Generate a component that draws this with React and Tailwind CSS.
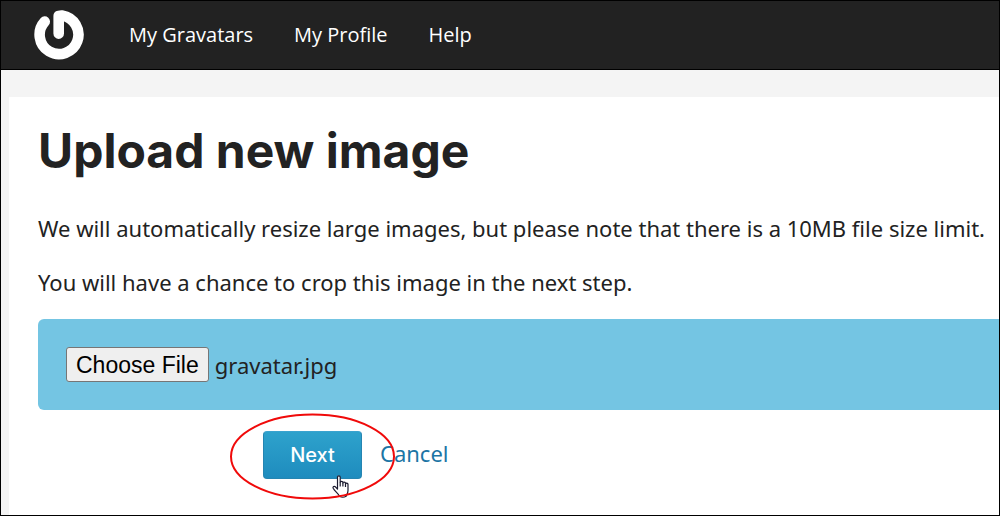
import { useRef, useState } from "react";

function Logo() {
  return (
    <svg viewBox="0 0 54 54" className="h-[54px] w-[54px]" fill="none" stroke="#fff" strokeWidth="10.6" strokeLinecap="round" strokeLinejoin="round" aria-hidden="true">
      <path d="M12.7 13.6A19.4 19.4 0 1 0 30 7.500L26.700 8V25.600" />
    </svg>
  );
}

function HandCursor() {
  return (
    <svg viewBox="0 0 17 23" className="pointer-events-none absolute left-[69px] top-[44px] h-[23px] w-[17px]" fill="#fff" stroke="#1a1a2e" strokeWidth="1.2" strokeLinejoin="round" aria-hidden="true">
      <path d="M5.5 14V2.2C5.5 .3 8.200 .3 8.200 2.200V7.500C8.200 6 10.900 6 10.900 7.500V8C10.900 6.800 13.500 6.900 13.500 8.200V8.800C13.500 7.800 16 8 16 9.300V15.500C16 18.500 14.500 19.500 14.200 21.200C12 22.500 9.500 22.500 7.500 21.200C6.500 18.500 3 16.500 1.200 13.200C.5 11.800 2.200 10.700 3.400 11.800Z" />
      <path d="M8.200 7.500V11.500M10.900 8V11.500M13.500 8.800V12" fill="none" />
    </svg>
  );
}

export default function App() {
  const picker = useRef(null);
  const [fileName, setFileName] = useState("gravatar.jpg");

  return (
    <div className="flex min-h-screen flex-col overflow-hidden border border-black bg-[#f4f4f4] font-['Noto_Sans',sans-serif] text-[#222]">
      <header className="flex h-[69px] shrink-0 items-center border-b border-black bg-[#222] pl-[31px]">
        <a href="#home" aria-label="Gravatar">
          <Logo />
        </a>
        <nav className="ml-[43px] flex gap-[41px] font-['Open_Sans',sans-serif] text-xl text-white">
          <a href="#gravatars">My Gravatars</a>
          <a href="#profile">My Profile</a>
          <a href="#help">Help</a>
        </nav>
      </header>

      <main className="ml-2 mt-[27px] flex-1 bg-white pl-[29px] pt-6">
        <h1 className="font-['Inter',sans-serif] text-5xl font-bold leading-[60px]">Upload new image</h1>
        <p className="mt-[31px] text-[22px] leading-8">
          We will automatically resize large images, but please note that there is a 10MB file size limit.
        </p>
        <p className="mt-[22px] text-[22px] leading-8">You will have a chance to crop this image in the next step.</p>

        <form onSubmit={(e) => e.preventDefault()}>
          <div className="mt-[21px] flex h-[91px] items-center gap-1.5 rounded-l-md bg-[#74c5e3] pl-7">
            <button
              type="button"
              onClick={() => picker.current.click()}
              className="h-[35px] rounded-[3px] border border-[#767676] bg-[#efefef] px-[9px] font-['Liberation_Sans',sans-serif] text-[23px] leading-8 text-black"
            >
              Choose File
            </button>
            <label htmlFor="picture" className="text-[22px] leading-8">
              {fileName}
            </label>
            <input
              ref={picker}
              id="picture"
              type="file"
              accept="image/*"
              className="hidden"
              onChange={(e) => e.target.files[0] && setFileName(e.target.files[0].name)}
            />
          </div>

          <div className="mb-8 ml-[225px] mt-[21px] flex items-center gap-[18px]">
            <div className="relative">
              <button
                type="submit"
                className="h-12 w-[99px] rounded-[4px] border border-[#2585b2] border-t-[#3aa3cf] bg-linear-to-b from-[#2ea2cc] to-[#1e8cbe] font-['Inter',sans-serif] text-xl font-medium text-white"
              >
                Next
              </button>
              <svg viewBox="0 0 168 88" className="pointer-events-none absolute -left-[34px] -top-[19px] z-10 h-[88px] w-[168px] max-w-none" fill="none" aria-hidden="true">
                <ellipse cx="83.500" cy="44.500" rx="81.500" ry="42" stroke="#f00a0a" strokeWidth="2" />
              </svg>
              <HandCursor />
            </div>
            <a href="#cancel" className="pb-1 text-[22px] leading-8 text-[#1c75a5]">
              Cancel
            </a>
          </div>
        </form>
      </main>
    </div>
  );
}
